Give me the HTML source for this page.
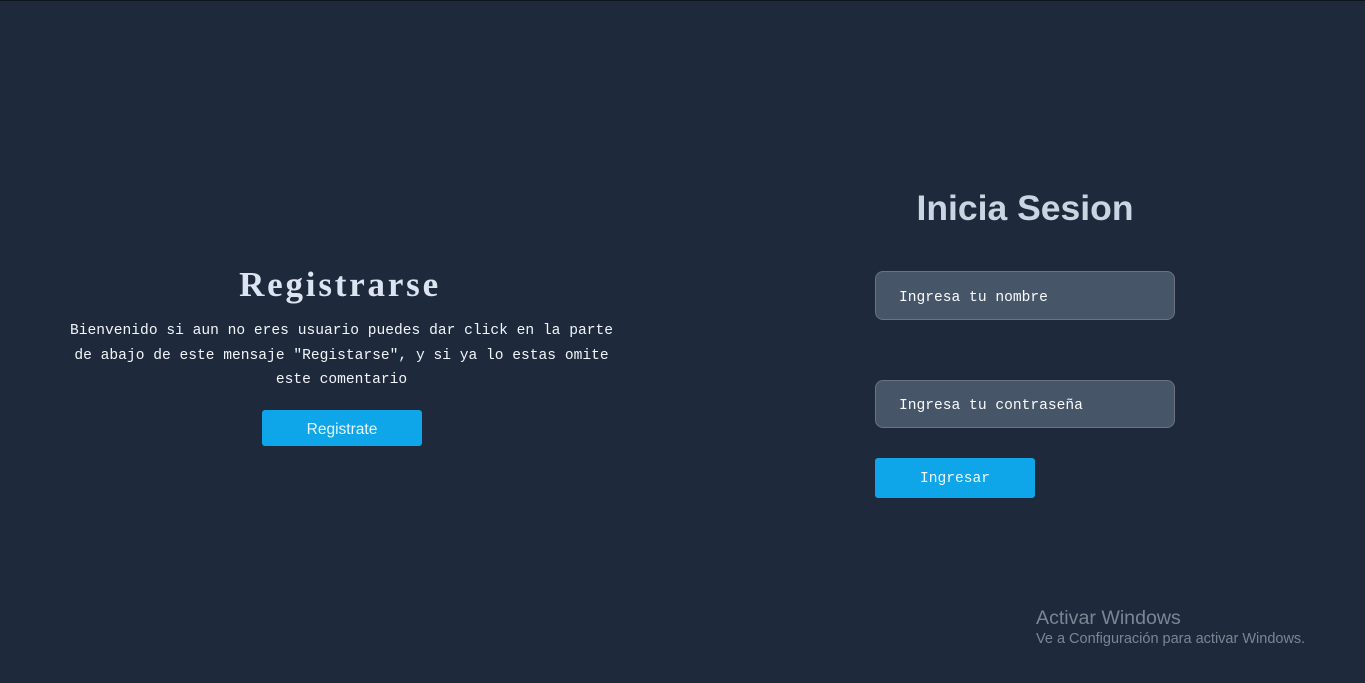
<!DOCTYPE html>
<html><head><meta charset="utf-8"><style>
html,body{margin:0;padding:0;}
body{width:1365px;height:683px;background:#1e293b;position:relative;overflow:hidden;}
.a{position:absolute;}
.mono{font-family:"Liberation Mono",monospace;}
</style></head><body>
<div class="a" style="left:0;top:0;width:1365px;height:1px;background:#0f1520;"></div>
<div class="a" style="left:140px;top:265px;width:400px;text-align:center;font-family:'Liberation Serif',serif;font-weight:bold;font-size:35px;letter-spacing:2.8px;color:#dbe4f0;">Registrarse</div>
<div class="a mono" style="left:57px;top:319px;width:569px;text-align:center;font-size:14.6px;line-height:24.5px;color:#f1f5f9;">Bienvenido si aun no eres usuario puedes dar click en la parte de abajo de este mensaje "Registarse", y si ya lo estas omite este comentario</div>
<div class="a" style="left:262px;top:410px;width:160px;height:36px;background:#0ea5e9;border-radius:3px;color:#e8f6fd;font-family:'Liberation Sans',sans-serif;font-size:15.5px;line-height:39px;text-align:center;">Registrate</div>

<div class="a" style="left:875px;top:188px;width:300px;text-align:center;font-family:'Liberation Sans',sans-serif;font-weight:bold;font-size:35.5px;color:#cbd5e1;">Inicia Sesion</div>
<div class="a mono" style="left:875px;top:271px;width:298px;height:47px;background:#475569;border:1px solid #6b7280;border-radius:8px;color:#f8fafc;font-size:14.6px;line-height:52px;"><span style="padding-left:23px">Ingresa tu nombre</span></div>
<div class="a mono" style="left:875px;top:380px;width:298px;height:46px;background:#475569;border:1px solid #6b7280;border-radius:8px;color:#f8fafc;font-size:14.6px;line-height:51px;overflow:hidden;"><span style="padding-left:23px">Ingresa tu contraseña</span></div>
<div class="a mono" style="left:875px;top:458px;width:160px;height:40px;background:#0ea5e9;border-radius:3px;color:#f1f9ff;font-size:14.6px;line-height:42px;text-align:center;">Ingresar</div>

<div class="a" style="left:1036px;top:607px;font-family:'Liberation Sans',sans-serif;font-size:19.6px;color:#7d8593;">Activar Windows</div>
<div class="a" style="left:1036px;top:631px;font-family:'Liberation Sans',sans-serif;font-size:14.5px;color:#7d8593;">Ve a Configuración para activar Windows.</div>
</body></html>
